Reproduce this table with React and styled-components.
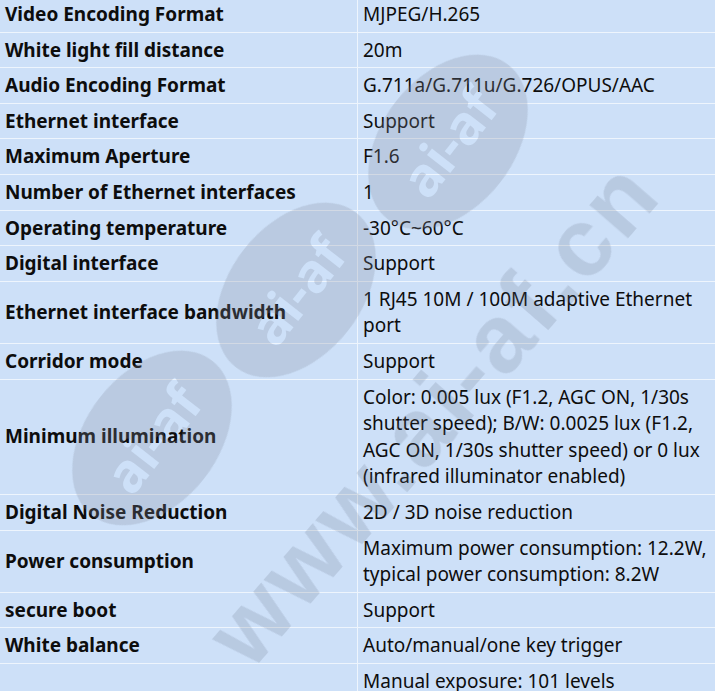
import React from 'react';
import styled, { createGlobalStyle } from 'styled-components';

const GlobalStyle = createGlobalStyle`
  html, body {
    margin: 0;
    padding: 0;
    overflow: hidden;
    background: #ffffff;
  }
`;

const Page = styled.div`
  position: relative;
  width: 715px;
  height: 691px;
  overflow: hidden;
  font-family: "Noto Sans", "Open Sans", sans-serif;
  color: #0d0d0d;
`;

const Table = styled.div`
  display: grid;
  grid-template-columns: 358px 1fr;
  margin-top: -3px;
  background: #cde0f8;
`;

const Cell = styled.div`
  display: flex;
  align-items: center;
  padding: 4px 5px 4px 5px;
  font-size: 19px;
  line-height: 26.6px;
  border-bottom: 1px solid #eef5fd;
  font-weight: ${p => (p.label ? 700 : 400)};
  border-right: ${p => (p.label ? '1px solid #eef5fd' : 'none')};
`;

const Watermark = styled.svg`
  position: absolute;
  left: 0;
  top: 0;
  pointer-events: none;
`;

const rows = [
  ['Video Encoding Format', 'MJPEG/H.265'],
  ['White light fill distance', '20m'],
  ['Audio Encoding Format', 'G.711a/G.711u/G.726/OPUS/AAC'],
  ['Ethernet interface', 'Support'],
  ['Maximum Aperture', 'F1.6'],
  ['Number of Ethernet interfaces', '1'],
  ['Operating temperature', '-30°C~60°C'],
  ['Digital interface', 'Support'],
  ['Ethernet interface bandwidth', '1 RJ45 10M / 100M adaptive Ethernet port'],
  ['Corridor mode', 'Support'],
  ['Minimum illumination', 'Color: 0.005 lux (F1.2, AGC ON, 1/30s shutter speed); B/W: 0.0025 lux (F1.2, AGC ON, 1/30s shutter speed) or 0 lux (infrared illuminator enabled)'],
  ['Digital Noise Reduction', '2D / 3D noise reduction'],
  ['Power consumption', 'Maximum power consumption: 12.2W, typical power consumption: 8.2W'],
  ['secure boot', 'Support'],
  ['White balance', 'Auto/manual/one key trigger'],
  ['Exposure control', 'Manual exposure: 101 levels Automatic/manual exposure mode with adjustable shutter'],
];

const badges = [
  { x: 448, y: 142 },
  { x: 296, y: 290 },
  { x: 152, y: 438 },
];

function Mark() {
  return (
    <Watermark width="715" height="691" viewBox="0 0 715 691">
      <defs>
        <mask id="cut">
          <rect width="715" height="691" fill="#fff" />
          {badges.map((b, i) => (
            <text
              key={i}
              transform={`translate(${b.x} ${b.y}) rotate(-52)`}
              textAnchor="middle"
              dominantBaseline="central"
              fontFamily="'Noto Sans', sans-serif"
              fontWeight="700"
              fontSize="54"
              fill="#000"
            >
              ai-af
            </text>
          ))}
        </mask>
      </defs>
      <g mask="url(#cut)">
        {badges.map((b, i) => (
          <ellipse
            key={i}
            cx="0"
            cy="0"
            rx="98"
            ry="66"
            transform={`translate(${b.x} ${b.y}) rotate(-52)`}
            fill="rgba(130,140,160,0.26)"
          />
        ))}
      </g>
      <text
        transform="translate(432 412) rotate(-49)"
        textAnchor="middle"
        dominantBaseline="central"
        fontFamily="'Liberation Sans', sans-serif"
        fontWeight="700"
        fontSize="96"
        letterSpacing="4"
        fill="rgba(95,105,125,0.19)"
      >
        www.ai-af.cn
      </text>
    </Watermark>
  );
}

export default function App() {
  return (
    <Page>
      <GlobalStyle />
      <Table>
        {rows.map(([label, value]) => (
          <React.Fragment key={label}>
            <Cell label>{label}</Cell>
            <Cell>{value}</Cell>
          </React.Fragment>
        ))}
      </Table>
      <Mark />
    </Page>
  );
}
